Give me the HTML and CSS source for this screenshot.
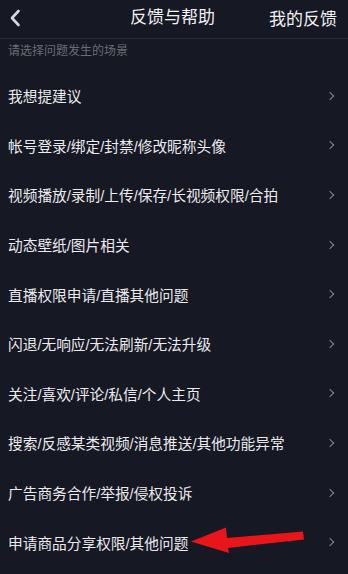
FILE: index.html
```html
<!DOCTYPE html>
<html lang="zh">
<head>
<meta charset="utf-8">
<link rel="stylesheet" href="styles.css">
</head>
<body>
<div class="page">
  <header class="top">
    <svg class="back" viewBox="0 0 12 18" width="12" height="18"><path d="M9.5 2 L3 9 L9.5 16" fill="none" stroke="#d6d6dc" stroke-width="2.6" stroke-linecap="round" stroke-linejoin="round"/></svg>
    <div class="title">反馈与帮助</div>
    <div class="mine">我的反馈</div>
  </header>
  <div class="label">请选择问题发生的场景</div>
  <ul class="list">
    <li class="row"><span>我想提建议</span><i class="chev"></i></li>
    <li class="row"><span>帐号登录/绑定/封禁/修改昵称头像</span><i class="chev"></i></li>
    <li class="row"><span>视频播放/录制/上传/保存/长视频权限/合拍</span><i class="chev"></i></li>
    <li class="row"><span>动态壁纸/图片相关</span><i class="chev"></i></li>
    <li class="row"><span>直播权限申请/直播其他问题</span><i class="chev"></i></li>
    <li class="row"><span>闪退/无响应/无法刷新/无法升级</span><i class="chev"></i></li>
    <li class="row"><span>关注/喜欢/评论/私信/个人主页</span><i class="chev"></i></li>
    <li class="row"><span>搜索/反感某类视频/消息推送/其他功能异常</span><i class="chev"></i></li>
    <li class="row"><span>广告商务合作/举报/侵权投诉</span><i class="chev"></i></li>
    <li class="row"><span>申请商品分享权限/其他问题</span><i class="chev"></i></li>
  </ul>
  <svg class="arrow" viewBox="0 0 348 574" width="348" height="574">
    <path d="M303 531.5 L304 539.5 L228 548 L229 553 L191 541.5 L226 527.5 L227 538 Z" fill="#e8161a"/>
  </svg>
</div>
</body>
</html>
```
FILE: styles.css
```css
* { box-sizing: border-box; }
html, body { margin: 0; padding: 0; }
body {
  background: #161823;
  font-family: "Liberation Sans", "Noto Sans CJK SC", sans-serif;
  color: #ebebee;
  width: 348px;
  height: 574px;
  overflow: hidden;
}
.page { position: relative; width: 348px; height: 574px; }
.top {
  height: 39px;
  border-bottom: 1px solid #2a2c37;
  display: flex;
  align-items: center;
  position: relative;
  padding: 0 11px 3px 9px;
}
.back { display: block; margin-top: 1px; }
.title {
  position: absolute;
  left: -3px; right: 0; top: 0;
  height: 35px;
  line-height: 35px;
  text-align: center;
  font-size: 17px;
  color: #f2f2f4;
}
.mine {
  margin-left: auto;
  font-size: 17px;
  color: #f2f2f4;
  position: relative;
}
.label {
  font-size: 12px;
  line-height: 16px;
  color: #6b6c75;
  padding: 4px 8px 12px;
  height: 32px;
}
.list { list-style: none; margin: 0; padding: 0; }
.row {
  height: 49.6px;
  display: flex;
  align-items: center;
  padding: 0 13px 0 8px;
  font-size: 14.7px;
}
.row span { flex: 1; white-space: nowrap; }
.chev {
  width: 6px; height: 6px;
  border-right: 1.4px solid #878892;
  border-top: 1.4px solid #878892;
  transform: rotate(45deg);
  margin-right: 2px;
}
.arrow { position: absolute; left: 0; top: 0; pointer-events: none; }
```
